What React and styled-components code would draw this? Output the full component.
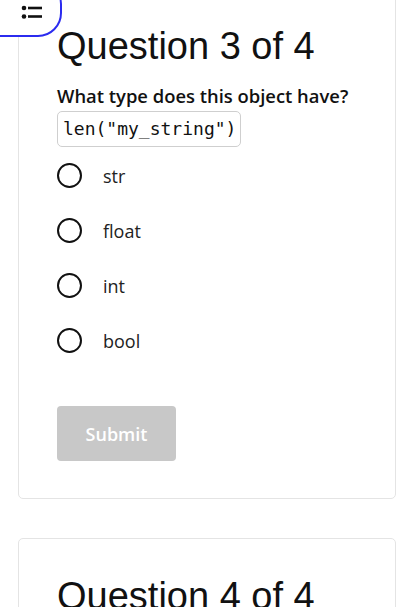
import styled, { createGlobalStyle } from 'styled-components'

const GlobalStyle = createGlobalStyle`
    html, body {
        margin: 0;
        padding: 0;
        background: #ffffff;
        overflow: hidden;
    }
`

const StyledPage = styled.main`
    display: flex;
    flex-direction: column;
    gap: 39px;
    padding: 0 18px 0 18px;
    margin-top: -12px;
`

const StyledCard = styled.section`
    border: 1px solid #e4e4e4;
    border-radius: 5px;
    padding: 34px 38px 37px 38px;
    display: flex;
    flex-direction: column;
    align-items: flex-start;
`

const StyledHeading = styled.h2`
    margin: 0;
    font-family: "Liberation Sans", Arial, sans-serif;
    font-weight: 400;
    font-size: 38px;
    line-height: 46px;
    color: #111;
`

const StyledPrompt = styled.p`
    margin: 15px 0 3px 0;
    font-family: "Open Sans", sans-serif;
    font-weight: 600;
    font-size: 18.4px;
    line-height: 24px;
    color: #111;
`

const StyledCode = styled.code`
    display: inline-block;
    font-family: "DejaVu Sans Mono", monospace;
    font-size: 18px;
    line-height: 24px;
    padding: 5px 4px 5px 5px;
    border: 1px solid #cfcfcf;
    border-radius: 5px;
    color: #111;
`

const StyledOptions = styled.div`
    display: flex;
    flex-direction: column;
    gap: 30px;
    margin-top: 16px;
`

const StyledOption = styled.label`
    display: flex;
    align-items: center;
    gap: 21px;
    height: 25px;
    font-family: "Open Sans", sans-serif;
    font-size: 18px;
    color: #222;
    cursor: pointer;
`

const StyledRadio = styled.span`
    width: 21px;
    height: 21px;
    border: 2.5px solid #111;
    border-radius: 50%;
    flex-shrink: 0;
`

const StyledSubmit = styled.button`
    margin-top: 53px;
    width: 119px;
    height: 55px;
    border: none;
    border-radius: 4px;
    background: #c8c8c8;
    color: #fff;
    font-family: "Open Sans", sans-serif;
    font-weight: 600;
    font-size: 18px;
`

const StyledMenuButton = styled.button`
    position: fixed;
    top: -20px;
    left: -30px;
    width: 92px;
    height: 57px;
    border: 2px solid #2b2bef;
    border-radius: 24px;
    background: #fff;
    padding: 20px 0 0 30px;
    display: flex;
    align-items: flex-start;
    z-index: 2;
`

function ListIcon() {
    return (
        <svg width="46" height="22" viewBox="0 0 46 22">
            <circle cx="22" cy="6" r="2.3" fill="#111" />
            <circle cx="22" cy="14.5" r="2.3" fill="#111" />
            <line x1="26" y1="6" x2="40" y2="6" stroke="#111" strokeWidth="2.6" />
            <line x1="26" y1="14.5" x2="40" y2="14.5" stroke="#111" strokeWidth="2.6" />
        </svg>
    )
}

const options = ['str', 'float', 'int', 'bool']

export default function App() {
    return (
        <>
            <GlobalStyle />
            <StyledMenuButton aria-label="Questions">
                <ListIcon />
            </StyledMenuButton>
            <StyledPage>
                <StyledCard>
                    <StyledHeading>Question 3 of 4</StyledHeading>
                    <StyledPrompt>What type does this object have?</StyledPrompt>
                    <StyledCode>len("my_string")</StyledCode>
                    <StyledOptions>
                        {options.map(option => (
                            <StyledOption key={option}>
                                <StyledRadio />
                                {option}
                            </StyledOption>
                        ))}
                    </StyledOptions>
                    <StyledSubmit disabled>Submit</StyledSubmit>
                </StyledCard>
                <StyledCard>
                    <StyledHeading>Question 4 of 4</StyledHeading>
                    <StyledPrompt>Which of these is a mutable type?</StyledPrompt>
                </StyledCard>
            </StyledPage>
        </>
    )
}
